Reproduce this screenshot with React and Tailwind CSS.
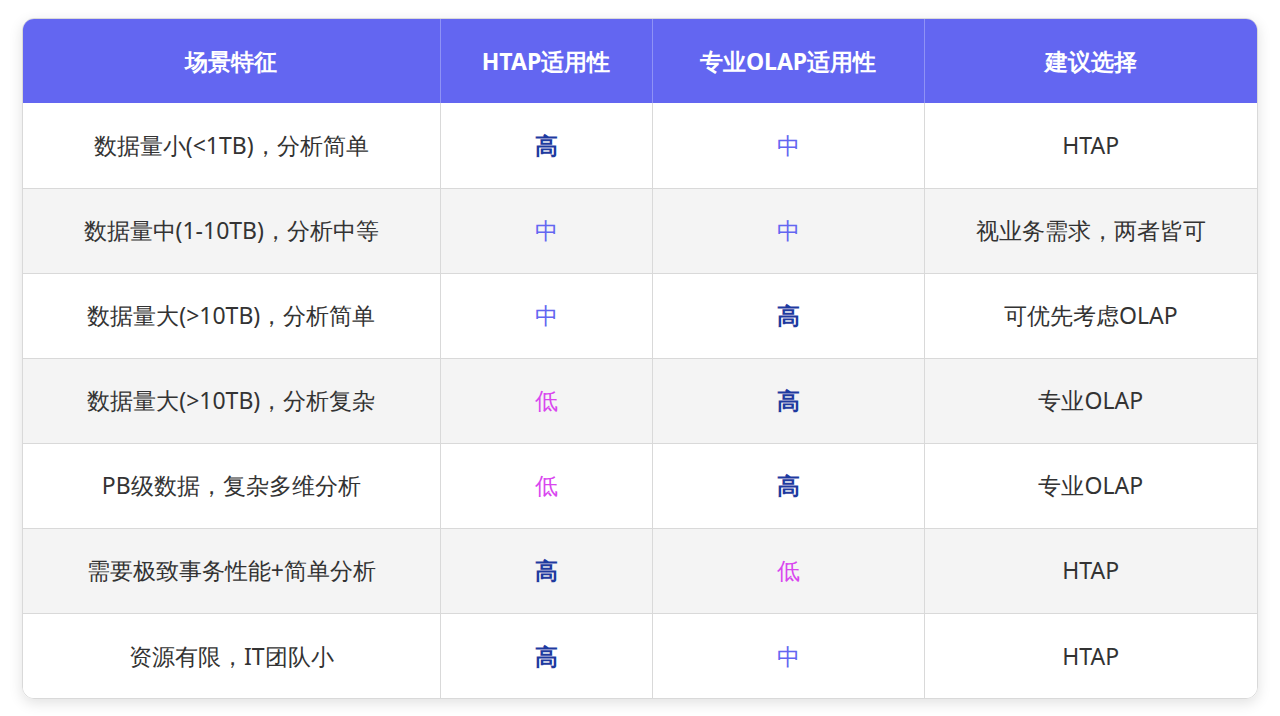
const rows = [
  ['数据量小(<1TB)，分析简单', '高', '中', 'HTAP'],
  ['数据量中(1-10TB)，分析中等', '中', '中', '视业务需求，两者皆可'],
  ['数据量大(>10TB)，分析简单', '中', '高', '可优先考虑OLAP'],
  ['数据量大(>10TB)，分析复杂', '低', '高', '专业OLAP'],
  ['PB级数据，复杂多维分析', '低', '高', '专业OLAP'],
  ['需要极致事务性能+简单分析', '高', '低', 'HTAP'],
  ['资源有限，IT团队小', '高', '中', 'HTAP'],
]

const levelClass = {
  '高': 'font-bold text-[#1e3a9f]',
  '中': 'text-[#6366f1]',
  '低': 'text-[#d946ef]',
}

export default function App() {
  return (
    <div className="w-[1280px] h-[716px] bg-white pt-[18px] px-[22px] font-['Noto_Sans_CJK_SC',sans-serif]">
      <div className="rounded-xl overflow-hidden shadow-[0_4px_14px_rgba(0,0,0,0.12)] border border-[#d9d9d9]">
        <table className="w-full border-collapse text-[23px] text-[#333]">
          <colgroup>
            <col className="w-[417px]" />
            <col className="w-[212px]" />
            <col className="w-[272px]" />
            <col />
          </colgroup>
          <thead>
            <tr className="bg-[#6366f1] text-white h-[84px] text-[23px]">
              {['场景特征', 'HTAP适用性', '专业OLAP适用性', '建议选择'].map((h, i) => (
                <th key={h} className={`font-bold ${i > 0 ? 'border-l border-[#8f92f5]' : ''}`}>{h}</th>
              ))}
            </tr>
          </thead>
          <tbody>
            {rows.map((r, i) => (
              <tr key={i} className={`h-[85px] ${i % 2 ? 'bg-[#f4f4f4]' : 'bg-white'} ${i > 0 ? 'border-t border-[#d9d9d9]' : ''}`}>
                <td className="text-center">{r[0]}</td>
                <td className={`text-center border-l border-[#d9d9d9] ${levelClass[r[1]]}`}>{r[1]}</td>
                <td className={`text-center border-l border-[#d9d9d9] ${levelClass[r[2]]}`}>{r[2]}</td>
                <td className="text-center border-l border-[#d9d9d9]">{r[3]}</td>
              </tr>
            ))}
          </tbody>
        </table>
      </div>
    </div>
  )
}
